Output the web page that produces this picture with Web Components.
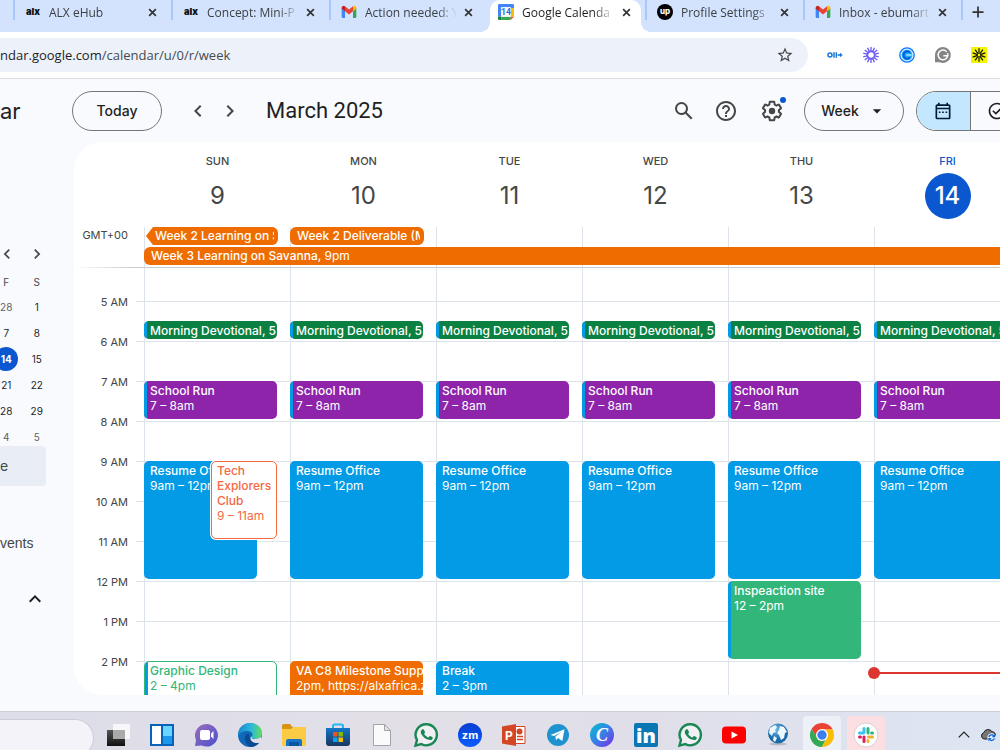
<!DOCTYPE html>
<html lang="en">
<head>
<meta charset="utf-8">
<meta name="viewport" content="width=device-width, initial-scale=1">
<title>Google Calendar - Week of March 9, 2025</title>
<style>
  html, body { height: 100%; }
  body {
    margin: 0;
    display: flex;
    flex-direction: column;
    overflow: hidden;
    background: #f8fafd;
    color: #1f1f1f;
    font-family: Inter, Roboto, "Liberation Sans", sans-serif;
    --chrome-font: "Open Sans", "Noto Sans", sans-serif;
    --line: #dde3ea;
    --blue: #0b57d0;
  }
</style>
</head>
<body>

<tab-strip>
  <browser-tab icon="alx">ALX eHub</browser-tab>
  <browser-tab icon="alx">Concept: Mini-P</browser-tab>
  <browser-tab icon="gmail">Action needed: Y</browser-tab>
  <browser-tab icon="gcal" active>Google Calenda</browser-tab>
  <browser-tab icon="upwork">Profile Settings</browser-tab>
  <browser-tab icon="gmail">Inbox - ebumart</browser-tab>
</tab-strip>

<browser-toolbar></browser-toolbar>

<calendar-app>
  <calendar-header slot="header" heading="March 2025"></calendar-header>
  <calendar-sidebar slot="sidebar"></calendar-sidebar>
  <week-view></week-view>
</calendar-app>

<task-bar></task-bar>

<script>
// ── icons ────────────────────────────────────────────────────────────────────

const PHONE = 'M9.3 7.2c-.3-.6-.5-.6-.8-.6h-.7c-.3 0-.7.1-1 .5-.4.4-1.3 1.3-1.3 3 0 1.8 1.3 3.5 1.5 3.7.2.3 2.6 4 6.3 5.4 3.1 1.2 3.8.9 4.4.9.7-.1 2.2-.9 2.5-1.8.3-.8.3-1.6.2-1.7-.1-.2-.3-.3-.7-.5l-2.4-1.1c-.3-.1-.6-.2-.8.2l-1.1 1.3c-.2.3-.4.3-.8.1-.3-.2-1.5-.5-2.8-1.7-1.1-.9-1.8-2.1-2-2.5-.2-.3 0-.5.2-.7l.5-.6.3-.6c.1-.2.1-.4 0-.6z'

const rays = (n, inner, outer, width, color) => Array.from({ length: n }, (_, i) =>
  `<path d="M12 ${12 - inner}V${12 - outer}" stroke="${color}" stroke-width="${width}" transform="rotate(${i * 360 / n} 12 12)"/>`
).join('')

const ICONS = {
  alx: `<text x="12" y="16" text-anchor="middle" font-family="Inter, sans-serif" font-size="14" font-weight="900" fill="#111">alx</text>`,
  gmail: `
    <path fill="#4285f4" d="M1 6v13a2 2 0 0 0 2 2h3V10z"/>
    <path fill="#34a853" d="M23 6v13a2 2 0 0 1-2 2h-3V10z"/>
    <path fill="#c5221f" d="M1 6c0-3 3-4.5 5-2.7V11L1 7z"/>
    <path fill="#fbbc04" d="M23 6c0-3-3-4.5-5-2.7V11l5-4z"/>
    <path fill="#ea4335" d="M6 3.5l6 4.7 6-4.7V11l-6 4.7L6 11z"/>`,
  gcal: `
    <path fill="#4285f4" d="M2 0h20a2 2 0 0 1 2 2v4h-5V5H5v14H0V2a2 2 0 0 1 2-2z"/>
    <path fill="#fbbc04" d="M19 6h5v13h-5z"/>
    <path fill="#34a853" d="M5 19h14v5H5z"/>
    <path fill="#188038" d="M0 19h5v5H2a2 2 0 0 1-2-2z"/>
    <path fill="#ea4335" d="M19 19h5l-5 5z"/>
    <path fill="#fff" d="M5 5h14v14H5z"/>
    <text x="12" y="17" text-anchor="middle" font-family="Roboto, sans-serif" font-size="13" font-weight="700" fill="#1a73e8">14</text>`,
  upwork: `
    <circle cx="12" cy="12" r="12" fill="#000"/>
    <text x="12" y="15" text-anchor="middle" font-family="Inter, sans-serif" font-size="12" font-weight="800" fill="#fff">up</text>`,
  close: `<path d="M3 3l18 18M21 3L3 21" fill="none" stroke="currentColor" stroke-width="4.5"/>`,
  plus: `<path d="M12 1v22M1 12h22" fill="none" stroke="currentColor" stroke-width="3.5"/>`,
  star: `<path fill="currentColor" d="M22 9.24l-7.19-.62L12 2 9.19 8.63 2 9.24l5.46 4.73L5.82 21 12 17.27 18.18 21l-1.63-7.03L22 9.24zM12 15.4l-3.76 2.27 1-4.28-3.32-2.88 4.38-.38L12 6.1l1.71 4.04 4.38.38-3.32 2.88 1 4.28L12 15.4z"/>`,
  extAlx: `
    <circle cx="4.5" cy="12" r="3" fill="none" stroke="#1673d8" stroke-width="2.2"/>
    <path d="M10.5 8v8M14 8v8" stroke="#1673d8" stroke-width="2.2"/>
    <path d="M16 12h7M20.5 9.5v5" stroke="#1673d8" stroke-width="2"/>`,
  loom: rays(14, 6, 12, 2, '#6a5cf5') + `<circle cx="12" cy="12" r="5.5" fill="none" stroke="#6a5cf5" stroke-width="2.6"/>`,
  calendly: `
    <circle cx="12" cy="12" r="10.8" fill="#d5edff" stroke="#0a78ff" stroke-width="2"/>
    <circle cx="12" cy="12" r="8" fill="#20a7f5"/>
    <path d="M16.5 8.5a5.5 5.5 0 1 0 0 7" fill="none" stroke="#005fe0" stroke-width="3"/>
    <path fill="#7fd8ff" d="M11 10.5h8v3h-8z"/>`,
  grammarly: `
    <path fill="#858585" d="M12 0a12 12 0 1 1-5 23H0V12A12 12 0 0 1 12 0z"/>
    <path d="M17.5 7a7.3 7.3 0 1 0 1.7 6h-6.7M19 9.5v4" fill="none" stroke="#fff" stroke-width="2.2"/>`,
  yellowStar: `<path fill="#f4f500" d="M0 0h24v24H0z"/>` + rays(10, 2, 10, 1.8, '#111'),

  left: `<path fill="currentColor" d="M15.41 7.41L14 6l-6 6 6 6 1.41-1.41L10.83 12z"/>`,
  right: `<path fill="currentColor" d="M10 6L8.59 7.41 13.17 12l-4.58 4.59L10 18l6-6z"/>`,
  up: `<path fill="currentColor" d="M12 8l-6 6 1.41 1.41L12 10.83l4.59 4.58L18 14z"/>`,
  caret: `<path fill="currentColor" d="M7 10l5 5 5-5z"/>`,
  search: `<path fill="currentColor" d="M20.49 19l-5.73-5.73C15.53 12.2 16 10.91 16 9.5A6.5 6.5 0 1 0 9.5 16c1.41 0 2.7-.47 3.77-1.24L19 20.49 20.49 19zM5 9.5C5 7.01 7.01 5 9.5 5S14 7.01 14 9.5 11.99 14 9.5 14 5 11.99 5 9.5z"/>`,
  help: `<path fill="currentColor" d="M11 18h2v-2h-2v2zm1-16C6.48 2 2 6.48 2 12s4.48 10 10 10 10-4.48 10-10S17.52 2 12 2zm0 18c-4.41 0-8-3.59-8-8s3.59-8 8-8 8 3.59 8 8-3.59 8-8 8zm0-14c-2.21 0-4 1.79-4 4h2c0-1.1.9-2 2-2s2 .9 2 2c0 2-3 1.75-3 5h2c0-2.25 3-2.5 3-5 0-2.21-1.79-4-4-4z"/>`,
  gear: `<path fill="currentColor" d="M13.85 22.25h-3.7c-.74 0-1.36-.54-1.45-1.27l-.27-1.89c-.27-.14-.53-.29-.79-.46l-1.8.72c-.7.26-1.47-.03-1.81-.65L2.2 15.53c-.35-.66-.2-1.44.36-1.88l1.53-1.19c-.01-.15-.02-.3-.02-.46 0-.15.01-.31.02-.46l-1.52-1.19c-.59-.45-.74-1.26-.37-1.88l1.85-3.19c.34-.62 1.11-.9 1.79-.63l1.81.73c.26-.17.52-.32.78-.46l.27-1.91c.09-.7.71-1.25 1.44-1.25h3.7c.74 0 1.36.54 1.45 1.27l.27 1.89c.27.14.53.29.79.46l1.8-.72c.71-.26 1.48.03 1.82.65l1.84 3.18c.36.66.2 1.44-.36 1.88l-1.52 1.19c.01.15.02.3.02.46s-.01.31-.02.46l1.52 1.19c.56.45.72 1.23.37 1.86l-1.86 3.22c-.34.62-1.11.9-1.8.63l-1.8-.72c-.26.17-.52.32-.78.46l-.27 1.91c-.1.68-.72 1.22-1.46 1.22zm-3.23-2h2.76l.37-2.55.53-.22c.44-.18.88-.44 1.34-.78l.45-.34 2.38.96 1.38-2.4-2.03-1.58.07-.56c.03-.26.06-.51.06-.78s-.03-.53-.06-.78l-.07-.56 2.03-1.58-1.39-2.4-2.39.96-.45-.35c-.42-.32-.87-.58-1.33-.77l-.52-.22-.37-2.55h-2.76l-.37 2.55-.53.21c-.44.19-.88.44-1.34.79l-.45.33-2.38-.95-1.39 2.39 2.03 1.58-.07.56a7 7 0 0 0-.06.79c0 .26.02.53.06.78l.07.56-2.03 1.58 1.38 2.4 2.39-.96.45.35c.43.33.86.58 1.33.77l.53.22z"/><circle cx="12" cy="12" r="3.2" fill="currentColor"/>`,
  calendar: `<path fill="currentColor" d="M19 4h-1V2h-2v2H8V2H6v2H5c-1.11 0-1.99.9-1.99 2L3 20a2 2 0 0 0 2 2h14c1.1 0 2-.9 2-2V6c0-1.1-.9-2-2-2zm0 16H5V10h14v10zm0-12H5V6h14v2zM7 12.5h2v2H7zm4 0h2v2h-2zm4 0h2v2h-2z"/>`,
  task: `<path fill="currentColor" d="M22 5.18L10.59 16.6l-4.24-4.24 1.41-1.41 2.83 2.83 10-10L22 5.18zm-2.21 5.04c.13.57.21 1.17.21 1.78 0 4.42-3.58 8-8 8s-8-3.58-8-8 3.58-8 8-8c1.58 0 3.04.46 4.28 1.25l1.44-1.44A9.9 9.9 0 0 0 12 2C6.48 2 2 6.48 2 12s4.48 10 10 10 10-4.48 10-10c0-1.19-.22-2.33-.6-3.39l-1.61 1.61z"/>`,

  taskview: `
    <linearGradient id="a" x2="0" y2="1"><stop stop-color="#555"/><stop offset="1" stop-color="#111"/></linearGradient>
    <path fill="url(#a)" d="M1 7h18v16H1z"/><path fill="#fff" fill-opacity=".75" d="M7 1h17v15H7z"/><path fill="#aaa" d="M7 7h12v9H7z"/>`,
  widgets: `
    <path fill="#0a62b8" d="M0 1h24v22H0z"/><path fill="#fff" d="M2 3h9v18H2z"/>
    <path fill="#68d4ff" d="M13 3h9v10h-9z"/><path fill="#1b97ec" d="M13 13h9v8h-9z"/>`,
  chat: `
    <linearGradient id="a" x2="1" y2="1"><stop stop-color="#9a6fb8"/><stop offset="1" stop-color="#4a50cf"/></linearGradient>
    <path fill="url(#a)" d="M12 1a11.5 11.3 0 1 1-4.5 21.500L1 23l1-6A11.5 11.3 0 0 1 12 1z"/>
    <rect x="6" y="7" width="10" height="10" rx="2" fill="#fff"/><path fill="#fff" d="M17 10.5l2.5-2.5v8L17 13.5z"/>`,
  edge: `
    <linearGradient id="a" x1="0" x2="1"><stop stop-color="#1686d4"/><stop offset=".55" stop-color="#2cb8d8"/><stop offset="1" stop-color="#64dd5c"/></linearGradient>
    <circle cx="12" cy="12" r="12" fill="#1268b8"/>
    <path fill="url(#a)" d="M0 12C.5 5 5.5 0 12 0s12 4.5 12 10c0 4-3 6-6.5 6-3 0-4.5-1.2-3.5-2.5 1.5-2.5-.5-5.5-4.5-5.500C4.5 8 1 10 0 14z"/>
    <path fill="#0d4a94" d="M8.5 11C4.5 15 8 22.5 13 24c4-.3 7-2.5 9-5.5-4 2-10.5.5-10.5-5 0-2-1.5-3.5-3-2.5z"/>
    <path fill="#e0dfe9" d="M13.8 13.8c-.8 1.2.8 2.2 3.7 2.2 2.2 0 4.5-.8 5.7-2.4L24 18l-1.5 1.500c-5 1.8-10-.5-10-4.5 0-1 .8-2 1.3-1.2z"/>`,
  folder: `
    <path fill="#d99310" d="M0 2.500A1.5 1.5 0 0 1 1.5 1H8l2.5 3H24v8H0z"/>
    <path fill="#fbcb45" d="M0 6h9l2-2h13v17.500a1.5 1.5 0 0 1-1.5 1.500h-21A1.5 1.5 0 0 1 0 21.5z"/>
    <path fill="#1773c6" d="M4 23v-5a2 2 0 0 1 2-2h12a2 2 0 0 1 2 2v5h-3v-3H7v3z"/><path fill="#0c569f" d="M7 19h10v4H7z"/>`,
  store: `
    <linearGradient id="a" x2="0" y2="1"><stop stop-color="#1476c8"/><stop offset="1" stop-color="#17375f"/></linearGradient>
    <path d="M7 7V3a1.5 1.5 0 0 1 1.5-1.5h7A1.5 1.5 0 0 1 17 3v4" fill="none" stroke="#27b6ef" stroke-width="2"/>
    <path fill="url(#a)" d="M0 5h24v15a3 3 0 0 1-3 3H3a3 3 0 0 1-3-3z"/>
    <path fill="#f25022" d="M7 9h4.500v4.500H7z"/><path fill="#7fba00" d="M12.5 9H17v4.500h-4.500z"/>
    <path fill="#00a4ef" d="M7 14.5h4.500V19H7z"/><path fill="#ffb900" d="M12.5 14.5H17V19h-4.500z"/>`,
  file: `<path fill="#fafafa" stroke="#a3a3a8" d="M3.5 1.5h11l6 6v15h-17z"/><path fill="#e4e4e6" stroke="#a3a3a8" d="M14.5 1.5v6h6z"/>`,
  whatsapp: `
    <path fill="#fff" fill-opacity=".5" stroke="#198754" stroke-width="2.4" d="M12.3 1.3a10.5 10.5 0 1 1-5 19.700L1.5 22.6 3 17A10.5 10.5 0 0 1 12.3 1.3z"/>
    <path fill="#198754" transform="translate(2.4 1) scale(.8)" d="${PHONE}"/>`,
  zoom: `
    <linearGradient id="a" x2="0" y2="1"><stop stop-color="#0a3ed0"/><stop offset="1" stop-color="#0b5cff"/></linearGradient>
    <circle cx="12" cy="12" r="12" fill="url(#a)"/>
    <text x="12" y="15.5" text-anchor="middle" font-family="Inter, sans-serif" font-size="11" font-weight="700" fill="#fff">zm</text>`,
  powerpoint: `
    <path fill="#fff" stroke="#d24726" d="M12 3.5h11v17H12z"/>
    <path d="M15 13.5h6M15 16.5h6" stroke="#d24726" stroke-width="1.5"/><circle cx="17.5" cy="8.5" r="3" fill="#d24726"/>
    <path fill="#d24726" d="M0 3.5L14 1v22L0 20.5z"/>
    <text x="7" y="16.5" text-anchor="middle" font-family="Inter, sans-serif" font-size="12" font-weight="700" fill="#fff">P</text>`,
  telegram: `
    <circle cx="12" cy="12" r="11" fill="#1f93cf"/>
    <path fill="#fff" d="M4.5 12L18.5 6.2 16.3 18l-4.3-3-2 2.2-.6-3.7 6-4.7-7.2 4.3z"/>`,
  canva: `
    <linearGradient id="a" x2="1" y2="1"><stop stop-color="#00c4cc"/><stop offset=".5" stop-color="#3b7fe6"/><stop offset="1" stop-color="#7d2ae8"/></linearGradient>
    <circle cx="12" cy="12" r="12" fill="url(#a)"/>
    <text x="12" y="18" text-anchor="middle" font-family="Liberation Serif, serif" font-style="italic" font-size="18" font-weight="700" fill="#fff">C</text>`,
  linkedin: `
    <rect width="24" height="24" rx="2" fill="#0a77b5"/>
    <text x="12" y="20" text-anchor="middle" font-family="Open Sans, sans-serif" font-size="20" font-weight="800" fill="#fff">in</text>`,
  youtube: `<rect y="3.5" width="24" height="17" rx="4" fill="#f00"/><path fill="#fff" d="M9.5 8.5l6.5 3.5-6.5 3.5z"/>`,
  globe: `
    <radialGradient id="a" cx=".4" cy=".3"><stop stop-color="#6fbbe6"/><stop offset="1" stop-color="#1a6aa8"/></radialGradient>
    <ellipse cx="12" cy="21" rx="9" ry="1.5" fill="#b9bac4"/>
    <circle cx="12" cy="10.5" r="10" fill="url(#a)"/>
    <path fill="#eef7fc" d="M4 5l5-3 2 2-2 3 1 2-3 1-1 3-3-3zM14 3l4 1 3 5-2 1-1 5-3 2-2-5-2-2 2-3zM8 13l3 2-2 4-2-2z"/>`,
  chrome: `
    <path fill="#ea4335" d="M22.7 6.5H12l-5.4 8L1.6 6a12 12 0 0 1 21.1.5z"/>
    <path fill="#34a853" d="M1.6 6l5.6 9 9 .4L12 24A12 12 0 0 1 1.6 6z"/>
    <path fill="#fbbc04" d="M22.7 6.5H13l4 8L12 24A12 12 0 0 0 22.7 6.5z"/>
    <circle cx="12" cy="12" r="6" fill="#fff"/><circle cx="12" cy="12" r="4.7" fill="#3a7ef0"/>`,
  slack: `
    <circle cx="12" cy="12" r="12" fill="#fff" stroke="#d8d0d4"/>
    <g fill="none" stroke-width="3" stroke-linecap="round">
      <path stroke="#36c5f0" d="M10 5.5v4M5.5 10h4"/><path stroke="#2eb67d" d="M14 5.5v4.500M18.5 10h-1"/>
      <path stroke="#ecb22e" d="M14.5 14h4M14 17.5v1"/><path stroke="#e01e5a" d="M5.5 14h1M10 14v4.500"/>
    </g>`,
  chevronUp: `<path d="M3 16l9-9 9 9" fill="none" stroke="#222" stroke-width="2.2"/>`,
  cloud: `
    <path fill="#777" stroke="#1c1c1c" stroke-width="1.5" d="M6 18a5 5 0 0 1-.5-9.500A7 7 0 0 1 18 7a5.5 5.5 0 0 1 5 6v5z"/>
    <circle cx="17.5" cy="16" r="6.5" fill="#e9eef9"/>
    <path d="M13.5 15a4.2 4.2 0 0 1 7.5-1.500M21.5 17a4.2 4.2 0 0 1-7.5 1.5" fill="none" stroke="#0a66d8" stroke-width="2"/>
    <path fill="#0a66d8" d="M22.5 10.5v5h-5zM12.5 21.5v-5h5z"/>`
}

// ── base ─────────────────────────────────────────────────────────────────────

class UiElement extends HTMLElement {
  constructor() {
    super()
    this.attachShadow({ mode: 'open' })
  }

  connectedCallback() {
    this.shadowRoot.innerHTML = `
      <style>
        :host, * { box-sizing: border-box; }
        button { font: inherit; color: inherit; background: none; border: 0; margin: 0; padding: 0; cursor: pointer; }
        ${this.styles()}
      </style>
      ${this.render()}`
  }

  styles() { return '' }
  render() { return '<slot></slot>' }
}

class UiIcon extends UiElement {
  styles() {
    return `
      :host { display: block; flex: none; width: var(--size, 24px); height: var(--size, 24px); }
      svg { display: block; width: 100%; height: 100%; overflow: visible; }`
  }
  render() {
    return `<svg viewBox="0 0 24 24" aria-hidden="true">${ICONS[this.getAttribute('name')] || ''}</svg>`
  }
}

// ── browser ──────────────────────────────────────────────────────────────────

class TabStrip extends UiElement {
  styles() {
    return `
      :host { display: flex; flex: none; height: 32px; padding-left: 13px; background: #d3e3fd; overflow: hidden; }
      .new { display: flex; align-items: flex-end; height: 20px; padding: 0 9px 2px; border-left: 2px solid #a8c7fa; color: #333; }
      ui-icon { --size: 12px; }`
  }
  render() {
    return `
      <slot></slot>
      <button class="new" aria-label="New tab"><ui-icon name="plus"></ui-icon></button>`
  }
}

class BrowserTab extends UiElement {
  styles() {
    return `
      :host { display: block; flex: none; width: 158px; }
      .tab { display: flex; align-items: center; height: 20px; padding: 0 14px 0 10px; border-left: 2px solid #a8c7fa; }
      ui-icon { --size: 16px; margin-top: 4px; }
      .title {
        flex: 1; margin-left: 8px; padding-top: 6px; min-width: 0;
        overflow: hidden; white-space: nowrap;
        font: 12px/18px var(--chrome-font); color: #3c4043;
        -webkit-mask-image: linear-gradient(to right, #000 72px, transparent 92px);
        mask-image: linear-gradient(to right, #000 72px, transparent 92px);
      }
      .close { padding: 4px 0 0 8px; color: #333; }
      .close ui-icon { --size: 9px; margin: 0; }
      :host([active]) .tab {
        position: relative; height: 32px; margin: 0 4px 0 3px; padding: 0 10px 12px 8px;
        border: 0; border-radius: 10px 10px 0 0; background: #fff;
      }
      :host([active]) .title { color: #1f1f1f; }
      :host([active]) .tab::before, :host([active]) .tab::after {
        content: ''; position: absolute; bottom: 0; width: 10px; height: 10px;
      }
      :host([active]) .tab::before { right: 100%; background: radial-gradient(circle at 0 0, #d3e3fd 10px, #fff 10px); }
      :host([active]) .tab::after { left: 100%; background: radial-gradient(circle at 100% 0, #d3e3fd 10px, #fff 10px); }`
  }
  render() {
    return `
      <div class="tab">
        <ui-icon name="${this.getAttribute('icon')}"></ui-icon>
        <span class="title"><slot></slot></span>
        <button class="close" aria-label="Close tab"><ui-icon name="close"></ui-icon></button>
      </div>`
  }
}

class BrowserToolbar extends UiElement {
  styles() {
    return `
      :host { display: flex; flex: none; align-items: center; height: 47px; background: #fff; border-bottom: 1px solid #dcdee2; }
      .omnibox {
        flex: 1; display: flex; align-items: center; height: 34px; padding-right: 14px;
        border-radius: 0 17px 17px 0; background: #ecf1fa;
      }
      .url { flex: 1; font: 13px/20px var(--chrome-font); color: #474b50; }
      .url b { font-weight: 400; color: #1f1f1f; }
      .star { color: #444; --size: 18px; }
      .ext { display: flex; gap: 20px; padding: 0 13px 0 19px; --size: 16px; }`
  }
  render() {
    const ext = [['extAlx', 'Screen tools'], ['loom', 'Loom'], ['calendly', 'Calendly'], ['grammarly', 'Grammarly'], ['yellowStar', 'Notes']]
    return `
      <div class="omnibox">
        <span class="url"><b>ndar.google.com</b>/calendar/u/0/r/week</span>
        <button class="star" aria-label="Bookmark"><ui-icon name="star"></ui-icon></button>
      </div>
      <div class="ext">
        ${ext.map(([icon, label]) => `<button aria-label="${label}"><ui-icon name="${icon}"></ui-icon></button>`).join('')}
      </div>`
  }
}

// ── calendar ─────────────────────────────────────────────────────────────────

class CalendarApp extends UiElement {
  styles() {
    return `
      :host { display: flex; flex-direction: column; flex: 1; min-height: 0; padding-bottom: 16px; }
      .main { display: flex; flex: 1; min-height: 0; }`
  }
  render() {
    return `
      <slot name="header"></slot>
      <div class="main"><slot name="sidebar"></slot><slot></slot></div>`
  }
}

class CalendarHeader extends UiElement {
  styles() {
    return `
      :host { display: flex; flex: none; align-items: center; height: 63px; white-space: nowrap; color: #444746; }
      .brand { width: 72px; font-size: 22px; color: #1f1f1f; }
      .pill {
        display: flex; align-items: center; justify-content: center; height: 40px;
        border: 1px solid #747775; border-radius: 20px; font-size: 14px; font-weight: 500; color: #1f1f1f;
      }
      .today { width: 90px; }
      .arrows { display: flex; gap: 8px; padding: 0 24px; --size: 24px; }
      h1 { flex: 1; margin: 0; font: 400 22px/28px Roboto, sans-serif; color: #1f1f1f; }
      .tools { display: flex; gap: 18px; padding-right: 20px; }
      .settings { position: relative; margin-left: 4px; }
      .settings::after {
        content: ''; position: absolute; right: -2px; top: -2px;
        width: 6px; height: 6px; border-radius: 50%; background: var(--blue);
      }
      .week { width: 100px; gap: 8px; --size: 20px; }
      .switch { flex: none; width: 108px; margin: 0 -24px 0 12px; overflow: hidden; --size: 20px; }
      .switch button { display: flex; flex: 1; align-items: center; justify-content: center; height: 40px; }
      .switch button:first-child { border-right: 1px solid #747775; background: #c2e7ff; color: #001d35; }`
  }
  render() {
    return `
      <span class="brand">ar</span>
      <button class="pill today">Today</button>
      <div class="arrows">
        <button aria-label="Previous week"><ui-icon name="left"></ui-icon></button>
        <button aria-label="Next week"><ui-icon name="right"></ui-icon></button>
      </div>
      <h1>${this.getAttribute('heading')}</h1>
      <div class="tools">
        <button aria-label="Search"><ui-icon name="search"></ui-icon></button>
        <button aria-label="Support"><ui-icon name="help"></ui-icon></button>
        <button class="settings" aria-label="Settings"><ui-icon name="gear"></ui-icon></button>
      </div>
      <button class="pill week">Week <ui-icon name="caret"></ui-icon></button>
      <div class="pill switch">
        <button aria-label="Calendar"><ui-icon name="calendar"></ui-icon></button>
        <button aria-label="Tasks"><ui-icon name="task"></ui-icon></button>
      </div>`
  }
}

class CalendarSidebar extends UiElement {
  styles() {
    return `
      :host { display: block; flex: none; width: 74px; padding-top: 102px; overflow: hidden; color: #444746; }
      .nav { display: flex; margin-left: -8px; --size: 20px; }
      .nav button { display: flex; justify-content: center; width: 30px; }
      table { margin: 6px 0 0 -9px; border-collapse: collapse; font-size: 10px; line-height: 24px; table-layout: fixed; width: 61px; }
      th { font-weight: 400; height: 24px; padding: 0; }
      td { height: 26px; padding: 0; text-align: center; color: #1f1f1f; }
      .today span { display: block; width: 24px; height: 24px; margin: 0 auto; border-radius: 50%; background: var(--blue); color: #fff; font-weight: 700; }
      .other { color: #5f6368; }
      .find { width: 46px; height: 40px; background: #e9eef6; border-radius: 0 4px 4px 0; font-size: 14px; line-height: 40px; margin-top: -4px; }
      .link { margin-top: 47px; font: 14px/20px "Liberation Sans", sans-serif; color: #444746; }
      .fold { display: block; margin: 34px 0 0 23px; color: #1f1f1f; --size: 24px; }`
  }
  render() {
    const rows = [['28', '1'], ['7', '8'], ['14', '15'], ['21', '22'], ['28', '29'], ['4', '5']]
    const cell = (d, i) => `<td class="${d === '14' ? 'today' : i === 5 || (i === 0 && d === '28') ? 'other' : ''}"><span>${d}</span></td>`
    return `
      <div class="nav">
        <button aria-label="Previous month"><ui-icon name="left"></ui-icon></button>
        <button aria-label="Next month"><ui-icon name="right"></ui-icon></button>
      </div>
      <table>
        <thead><tr><th>F</th><th>S</th></tr></thead>
        <tbody>${rows.map((r, i) => `<tr>${r.map(d => cell(d, i)).join('')}</tr>`).join('')}</tbody>
      </table>
      <div class="find">e</div>
      <div class="link">vents</div>
      <button class="fold" aria-label="Collapse my calendars"><ui-icon name="up"></ui-icon></button>`
  }
}

/**
 * calendar-event — one block in a day column
 *
 * Attributes:
 *   start, end   hours, in halves (5.5 = 5:30)
 *   color        fill, or the outline of an event not yet answered
 *   outline      outline only
 *   stripe       blue band of the calendar it belongs to
 *   place        narrow | over, for two that overlap
 */
class CalendarEvent extends UiElement {
  styles() {
    const start = Number(this.getAttribute('start'))
    const end = Number(this.getAttribute('end'))
    const row = (start - 4.5) * 2 + 1
    return `
      :host {
        display: block; position: relative; overflow: hidden; min-width: 0;
        grid-column: 1; grid-row: ${row} / span ${(end - start) * 2};
        margin: 0 12px 2px 0; padding: 2px 0 0 6px; border-radius: 5px;
        background: ${this.getAttribute('color')}; color: #fff;
        font-size: 12px; line-height: 15px;
      }
      :host([outline]) { background: #fff; border: 1px solid; color: ${this.getAttribute('color')}; padding: 1px 0 0 5px; }
      :host([stripe])::before {
        content: ''; position: absolute; left: 0; top: 0; bottom: 0; width: 3px; background: #039be5;
      }
      :host([place="narrow"]) { margin-right: 32px; }
      :host([place="over"]) { margin-left: 67px; box-shadow: 0 0 0 1px #fff; }
      .title { font-weight: 500; }
      :host(:not([place="over"])) div { white-space: nowrap; }`
  }
  render() {
    const when = this.getAttribute('when')
    return `
      <div class="title"><slot></slot></div>
      ${when ? `<div>${when}</div>` : ''}`
  }
}

class WeekView extends UiElement {
  days = [
    { name: 'Sun', date: 9 }, { name: 'Mon', date: 10 }, { name: 'Tue', date: 11 },
    { name: 'Wed', date: 12 }, { name: 'Thu', date: 13 }, { name: 'Fri', date: 14, today: true }
  ]

  hours = ['5 AM', '6 AM', '7 AM', '8 AM', '9 AM', '10 AM', '11 AM', '12 PM', '1 PM', '2 PM']

  extra = {
    9: `<calendar-event start="9" end="11" color="#f4693f" outline place="over" when="9 – 11am">Tech Explorers Club</calendar-event>
        <calendar-event start="14" end="16" color="#33b679" outline stripe when="2 – 4pm">Graphic Design</calendar-event>`,
    10: `<calendar-event start="14" end="15.5" color="#ef6c00" when="2pm, https://alxafrica.zo">VA C8 Milestone Suppo</calendar-event>`,
    11: `<calendar-event start="14" end="15" color="#039be5" when="2 – 3pm">Break</calendar-event>`,
    13: `<calendar-event start="12" end="14" color="#33b679" stripe when="12 – 2pm">Inspeaction site</calendar-event>`,
    14: `<div class="now"></div>`
  }

  // the last day runs past the window's right edge
  styles() {
    return `
      :host {
        display: flex; flex-direction: column; flex: 1; min-width: 0; margin-right: -20px;
        border-radius: 28px 0 0 28px; background: #fff; overflow: hidden;
      }
      .row { display: grid; flex: none; grid-template-columns: 70px repeat(6, minmax(0, 1fr)); }
      .row > * { min-width: 0; }
      .head { height: 85px; text-align: center; }
      .day { display: flex; flex-direction: column; align-items: center; padding: 10px 0 0 1px; color: #444746; }
      .name { font-size: 11px; line-height: 18px; font-weight: 500; text-transform: uppercase; }
      .date { width: 46px; height: 46px; margin-top: 3px; border-radius: 50%; font-size: 24px; line-height: 46px; }
      .today .name { color: var(--blue); }
      .today .date { background: var(--blue); color: #fff; font-weight: 500; }

      .allday { grid-template-rows: 18px 18px; row-gap: 2px; padding-bottom: 2px; border-bottom: 1px solid #c9ccd0; border-image: linear-gradient(to right, #fff, #c9ccd0 60px) 1; }
      .tick { grid-row: 1 / 3; margin-bottom: -2px; border-left: 1px solid var(--line); }
      .zone { grid-area: 1 / 1; padding-right: 16px; text-align: right; font-size: 11px; line-height: 16px; color: #444746; }
      .chip {
        height: 18px; margin-right: 12px; padding-left: 7px; border-radius: 6px; background: #ef6c00; color: #fff;
        border-right: 4px solid #ef6c00;
        overflow: hidden; white-space: nowrap; font-size: 12px; line-height: 18px; font-weight: 500;
      }
      .chip i { font-style: normal; font-weight: 400; }
      .prev { margin-left: 2px; padding-left: 9px; clip-path: polygon(0 50%, 7px 0, 100% 0, 100% 100%, 7px 100%); }
      .long { margin-right: 0; border-radius: 6px 0 0 6px; }

      .body { flex: 1; min-height: 0; overflow: hidden; }
      .times, .column { background: linear-gradient(var(--line) 1px, transparent 1px) 0 33px / 100% 40px; }
      .times {
        padding: 14px 16px 0 0; text-align: right; font-size: 11px; line-height: 40px; color: #444746;
        background-position: 62px 33px;
        background-repeat: repeat-y;
      }
      .column { display: grid; grid-auto-rows: 20px; grid-template-columns: 100%; padding-top: 13px; border-left: 1px solid var(--line); }
      .column > * { left: -1px; }
      .now { position: relative; grid-area: 20 / 1; height: 2px; margin-top: 11px; background: #dc362e; }
      .now::before { content: ''; position: absolute; left: -6px; top: -5px; width: 12px; height: 12px; border-radius: 50%; background: #dc362e; }`
  }

  _renderDay({ date }) {
    return `
      <div class="column">
        <calendar-event start="5.5" end="6" color="#0b8043" stripe>Morning Devotional, 5:</calendar-event>
        <calendar-event start="7" end="8" color="#8e24aa" stripe when="7 – 8am">School Run</calendar-event>
        <calendar-event start="9" end="12" color="#039be5" ${date === 9 ? 'place="narrow"' : ''} when="9am – 12pm">Resume Office</calendar-event>
        ${this.extra[date] || ''}
      </div>`
  }

  render() {
    return `
      <div class="row head">
        <div></div>
        ${this.days.map(d => `
          <div class="day ${d.today ? 'today' : ''}"><span class="name">${d.name}</span><span class="date">${d.date}</span></div>`).join('')}
      </div>
      <div class="row allday">
        ${this.days.map((d, i) => `<div class="tick" style="grid-column: ${i + 2}"></div>`).join('')}
        <div class="zone">GMT+00</div>
        <div class="chip prev" style="grid-area: 1 / 2">Week 2 Learning on S</div>
        <div class="chip" style="grid-area: 1 / 3">Week 2 Deliverable (M</div>
        <div class="chip long" style="grid-area: 2 / 2 / 3 / 8">Week 3 Learning on Savanna, <i>9pm</i></div>
      </div>
      <div class="row body">
        <div class="times">${this.hours.map(h => `<div>${h}</div>`).join('')}</div>
        ${this.days.map(d => this._renderDay(d)).join('')}
      </div>`
  }
}

// ── desktop ──────────────────────────────────────────────────────────────────

class TaskBar extends UiElement {
  styles() {
    return `
      :host {
        display: flex; flex: none; height: 39px; padding-top: 4px; overflow: hidden;
        border-top: 1px solid #cfcfd9; background: linear-gradient(to right, #dcdde9, #e2dfe7 40%, #e0dfe9 65%, #dde5f3);
      }
      .search { width: 94px; height: 38px; margin: 3px 2px 0 0; padding: 0; border: 1px solid #cdccd8; border-left: 0; border-radius: 0 19px 19px 0; background: #f4f3fa; outline: 0; }
      button { display: flex; flex: none; align-items: center; justify-content: center; width: 38px; height: 38px; margin: 0 3px; border-radius: 4px 4px 0 0; }
      .open { background: #eef0f8; }
      .alert { background: #fbdfe3; }
      .tray { display: flex; margin-left: auto; --size: 14px; }
      .tray button { width: 24px; margin: 0; }
      .tray button + button { --size: 16px; }`
  }
  render() {
    const apps = ['taskview', 'widgets', 'chat', 'edge', 'folder', 'store', 'file', 'whatsapp', 'zoom', 'powerpoint',
      'telegram', 'canva', 'linkedin', 'whatsapp', 'youtube', 'globe', 'chrome', 'slack']
    const state = { chrome: 'open', slack: 'alert' }
    return `
      <input class="search" type="search" aria-label="Search">
      ${apps.map(a => `<button class="${state[a] || ''}" aria-label="${a}"><ui-icon name="${a}"></ui-icon></button>`).join('')}
      <div class="tray">
        <button aria-label="Show hidden icons"><ui-icon name="chevronUp"></ui-icon></button>
        <button aria-label="Cloud sync"><ui-icon name="cloud"></ui-icon></button>
      </div>`
  }
}

customElements.define('ui-icon', UiIcon)
customElements.define('tab-strip', TabStrip)
customElements.define('browser-tab', BrowserTab)
customElements.define('browser-toolbar', BrowserToolbar)
customElements.define('calendar-app', CalendarApp)
customElements.define('calendar-header', CalendarHeader)
customElements.define('calendar-sidebar', CalendarSidebar)
customElements.define('calendar-event', CalendarEvent)
customElements.define('week-view', WeekView)
customElements.define('task-bar', TaskBar)
</script>
</body>
</html>
